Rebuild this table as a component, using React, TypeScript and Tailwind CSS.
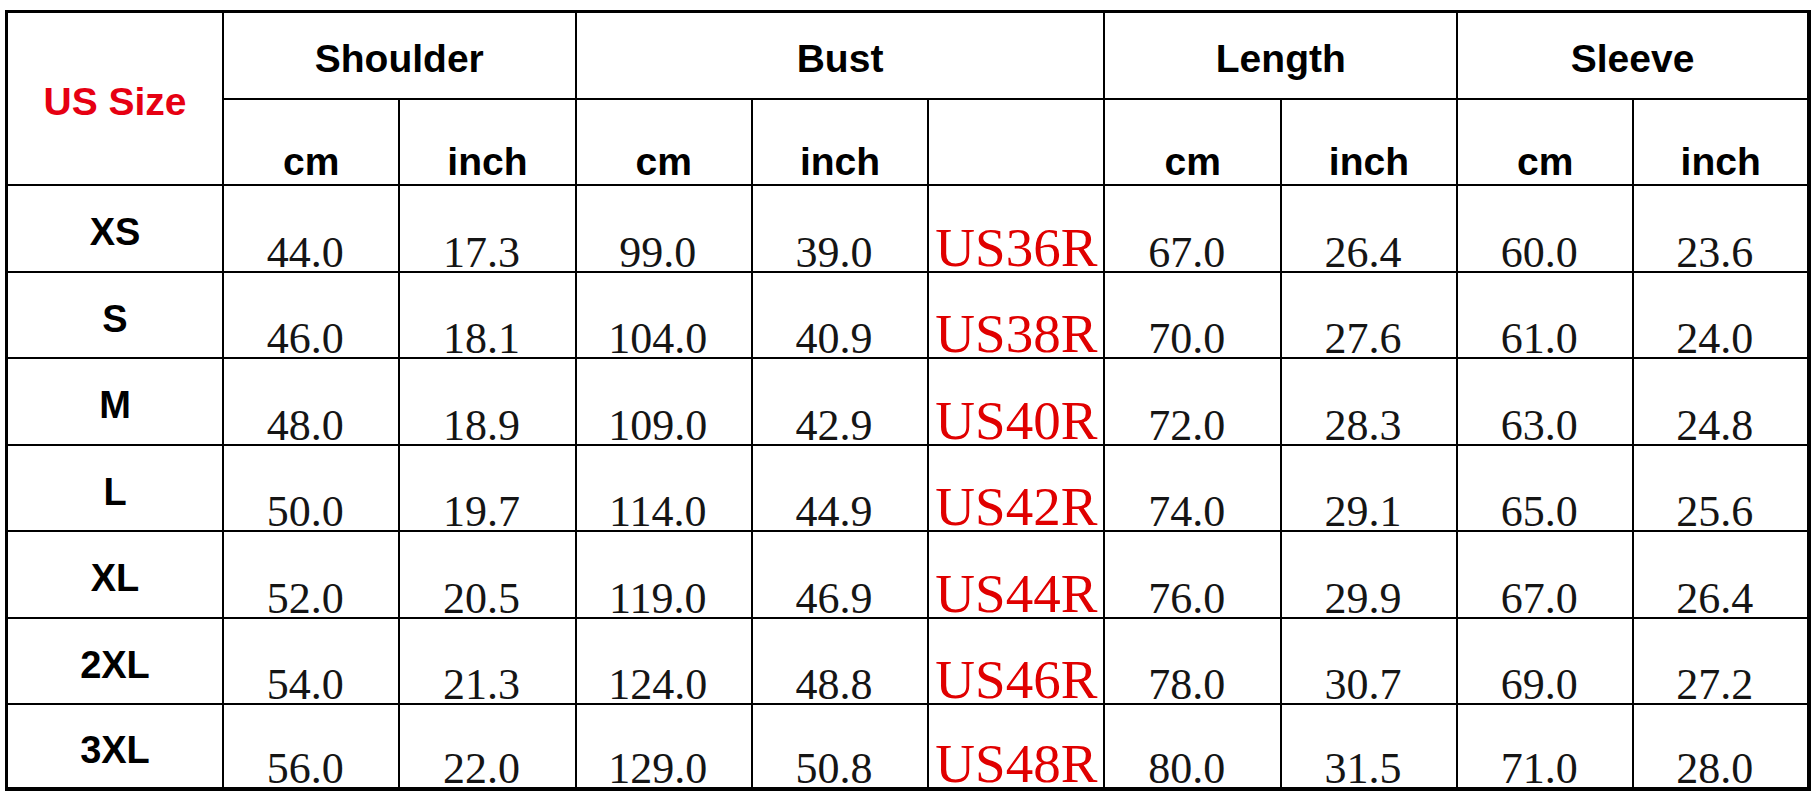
const rows = [
  { size: "XS", sh: ["44.0", "17.3"], bu: ["99.0", "39.0"], us: "US36R", le: ["67.0", "26.4"], sl: ["60.0", "23.6"] },
  { size: "S", sh: ["46.0", "18.1"], bu: ["104.0", "40.9"], us: "US38R", le: ["70.0", "27.6"], sl: ["61.0", "24.0"] },
  { size: "M", sh: ["48.0", "18.9"], bu: ["109.0", "42.9"], us: "US40R", le: ["72.0", "28.3"], sl: ["63.0", "24.8"] },
  { size: "L", sh: ["50.0", "19.7"], bu: ["114.0", "44.9"], us: "US42R", le: ["74.0", "29.1"], sl: ["65.0", "25.6"] },
  { size: "XL", sh: ["52.0", "20.5"], bu: ["119.0", "46.9"], us: "US44R", le: ["76.0", "29.9"], sl: ["67.0", "26.4"] },
  { size: "2XL", sh: ["54.0", "21.3"], bu: ["124.0", "48.8"], us: "US46R", le: ["78.0", "30.7"], sl: ["69.0", "27.2"] },
  { size: "3XL", sh: ["56.0", "22.0"], bu: ["129.0", "50.8"], us: "US48R", le: ["80.0", "31.5"], sl: ["71.0", "28.0"] },
];

const sans = "font-['Liberation_Sans',Arial,sans-serif]";
const serif = "font-['Liberation_Serif','Times_New_Roman',serif]";

function Num({ v, last, end }: { v: string; last?: boolean; end?: boolean }) {
  return (
    <div
      className={`flex items-end justify-center pr-[12px] ${serif} text-[44px] leading-[36px] text-[#151515] border-black ${last ? "" : "border-b-2"} ${end ? "" : "border-r-2"}`}
    >
      {v}
    </div>
  );
}

function Sub({ label, end }: { label: string; end?: boolean }) {
  return (
    <div
      className={`flex items-end justify-center pb-[3px] ${sans} text-[39px] font-bold leading-[39px] text-black border-black border-b-2 ${end ? "" : "border-r-2"}`}
    >
      {label}
    </div>
  );
}

function Group({ label, span, end }: { label: string; span: string; end?: boolean }) {
  return (
    <div
      className={`${span} flex items-center justify-center pt-[7px] ${sans} text-[39px] font-bold leading-[39px] text-black border-black border-b-2 ${end ? "" : "border-r-2"}`}
    >
      {label}
    </div>
  );
}

export default function App() {
  return (
    <div className="min-h-screen w-full bg-white pt-[10px] pl-[5px]">
      <div className="w-[1806px] border-t-[3px] border-l-[3px] border-r-[4px] border-b-[4px] border-black">
        <div className="grid h-[774px] grid-cols-[216px_repeat(8,176.3px)_1fr] grid-rows-[repeat(8,86.5px)_1fr]">
          <div
            className={`row-span-2 flex items-center justify-center pt-[5px] ${sans} text-[39px] font-bold leading-[39px] text-[#e60012] border-black border-b-2 border-r-2`}
          >
            US Size
          </div>
          <Group label="Shoulder" span="col-span-2" />
          <Group label="Bust" span="col-span-3" />
          <Group label="Length" span="col-span-2" />
          <Group label="Sleeve" span="col-span-2" end />

          <Sub label="cm" />
          <Sub label="inch" />
          <Sub label="cm" />
          <Sub label="inch" />
          <div className="border-black border-b-2 border-r-2" />
          <Sub label="cm" />
          <Sub label="inch" />
          <Sub label="cm" />
          <Sub label="inch" end />

          {rows.map((r, i) => {
            const last = i === rows.length - 1;
            return (
              <div key={r.size} className="contents">
                <div
                  className={`flex items-center justify-center pt-[8px] ${sans} text-[38px] font-bold leading-[38px] text-black border-black border-r-2 ${last ? "" : "border-b-2"}`}
                >
                  {r.size}
                </div>
                <Num v={r.sh[0]} last={last} />
                <Num v={r.sh[1]} last={last} />
                <Num v={r.bu[0]} last={last} />
                <Num v={r.bu[1]} last={last} />
                <div
                  className={`flex items-end justify-center ${serif} text-[55px] leading-[47px] text-[#e00000] border-black border-r-2 ${last ? "" : "border-b-2"}`}
                >
                  {r.us}
                </div>
                <Num v={r.le[0]} last={last} />
                <Num v={r.le[1]} last={last} />
                <Num v={r.sl[0]} last={last} />
                <Num v={r.sl[1]} last={last} end />
              </div>
            );
          })}
        </div>
      </div>
    </div>
  );
}
